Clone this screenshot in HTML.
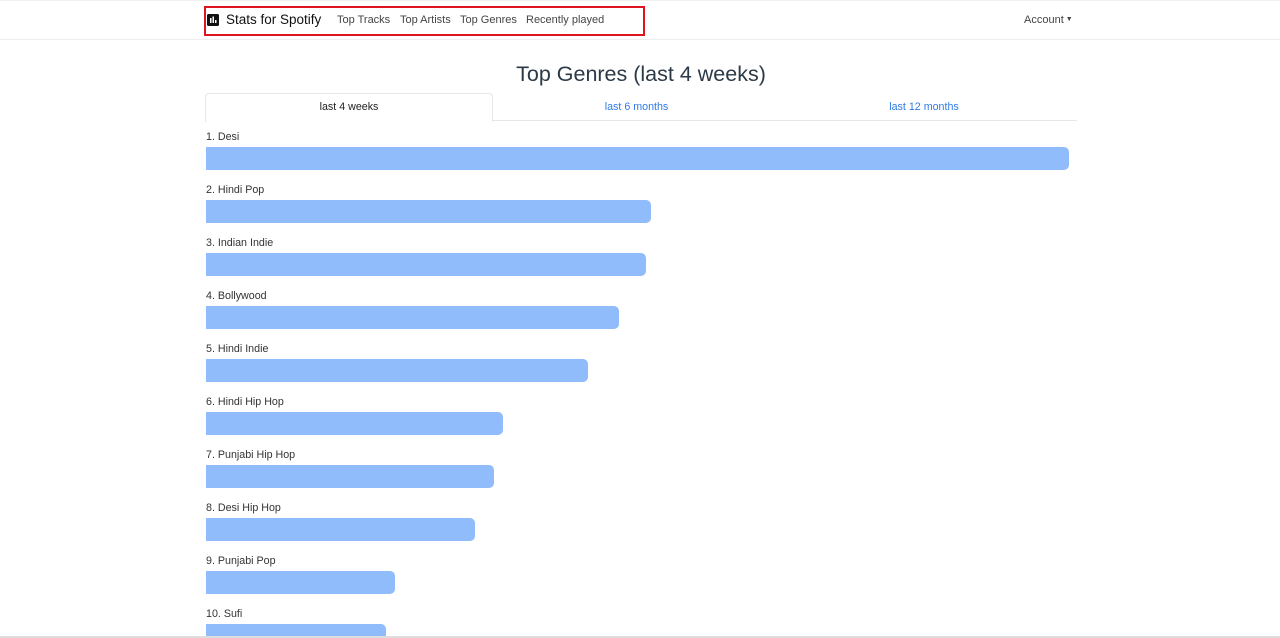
<!DOCTYPE html>
<html><head><style>
html,body{margin:0;width:1280px;height:638px;overflow:hidden}
body{background:#fff;font-family:"Liberation Sans",Arial,sans-serif;color:#212529;position:relative}
.nav{position:absolute;left:0;top:0;width:1280px;height:40px;border-bottom:1px solid #eee;border-top:1px solid #f0f0f0;box-sizing:border-box}
.box{position:absolute;left:204px;top:6px;width:441px;height:30px;border:2px solid #e0141e;box-sizing:border-box}
.t{position:absolute;white-space:nowrap}
.lbl{position:absolute;left:206px;font-size:10.7px;color:#333}
.bar{position:absolute;left:206px;height:23px;background:#90bcfc;border-radius:0 5px 5px 0}
</style></head><body>
<div class="nav"></div>
<div class="box"></div>
<svg style="position:absolute;left:207px;top:14px" width="12" height="12"><rect width="12" height="12" rx="1.5" fill="#111"/><rect x="3" y="4" width="1.5" height="5" fill="#fff"/><rect x="5.5" y="2.5" width="1.5" height="6.5" fill="#fff"/><rect x="8" y="6" width="1.5" height="3" fill="#fff"/></svg>
<div class="t" style="left:226px;top:12px;font-size:13.5px;color:#111">Stats for Spotify</div>
<div class="t" style="left:337px;top:14px;font-size:11px;color:#444">Top Tracks</div>
<div class="t" style="left:400px;top:14px;font-size:11px;color:#444">Top Artists</div>
<div class="t" style="left:460px;top:14px;font-size:11px;color:#444">Top Genres</div>
<div class="t" style="left:526px;top:14px;font-size:11px;color:#444">Recently played</div>
<div class="t" style="left:1024px;top:14px;font-size:11px;color:#444">Account<span style="font-size:7px;vertical-align:2px;margin-left:2px">▼</span></div>
<div class="t" style="left:0;width:1282px;text-align:center;top:62px;font-size:21.5px;color:#2c3a47">Top Genres (last 4 weeks)</div>
<div style="position:absolute;left:206px;top:120px;width:871px;border-top:1px solid #e6e6e6"></div>
<div style="position:absolute;left:205px;top:93px;width:286px;height:28px;border:1px solid #e6e6e6;border-bottom:none;border-radius:4px 4px 0 0;background:#fff"></div>
<div class="t" style="left:205px;width:288px;text-align:center;top:101px;font-size:10.7px;color:#222">last 4 weeks</div>
<div class="t" style="left:493px;width:287px;text-align:center;top:101px;font-size:10.7px;color:#2f7be6">last 6 months</div>
<div class="t" style="left:780px;width:288px;text-align:center;top:101px;font-size:10.7px;color:#2f7be6">last 12 months</div>

<div class="lbl" style="top:131px">1. Desi</div><div class="bar" style="top:147px;width:863px"></div>
<div class="lbl" style="top:184px">2. Hindi Pop</div><div class="bar" style="top:200px;width:445px"></div>
<div class="lbl" style="top:237px">3. Indian Indie</div><div class="bar" style="top:253px;width:440px"></div>
<div class="lbl" style="top:290px">4. Bollywood</div><div class="bar" style="top:306px;width:413px"></div>
<div class="lbl" style="top:343px">5. Hindi Indie</div><div class="bar" style="top:359px;width:382px"></div>
<div class="lbl" style="top:396px">6. Hindi Hip Hop</div><div class="bar" style="top:412px;width:297px"></div>
<div class="lbl" style="top:449px">7. Punjabi Hip Hop</div><div class="bar" style="top:465px;width:288px"></div>
<div class="lbl" style="top:502px">8. Desi Hip Hop</div><div class="bar" style="top:518px;width:269px"></div>
<div class="lbl" style="top:555px">9. Punjabi Pop</div><div class="bar" style="top:571px;width:189px"></div>
<div class="lbl" style="top:608px">10. Sufi</div><div class="bar" style="top:624px;width:180px;height:12px;border-radius:0 5px 0 0"></div>
<div style="position:absolute;left:0;top:636px;width:1280px;height:2px;background:#ddd"></div>
</body></html>
